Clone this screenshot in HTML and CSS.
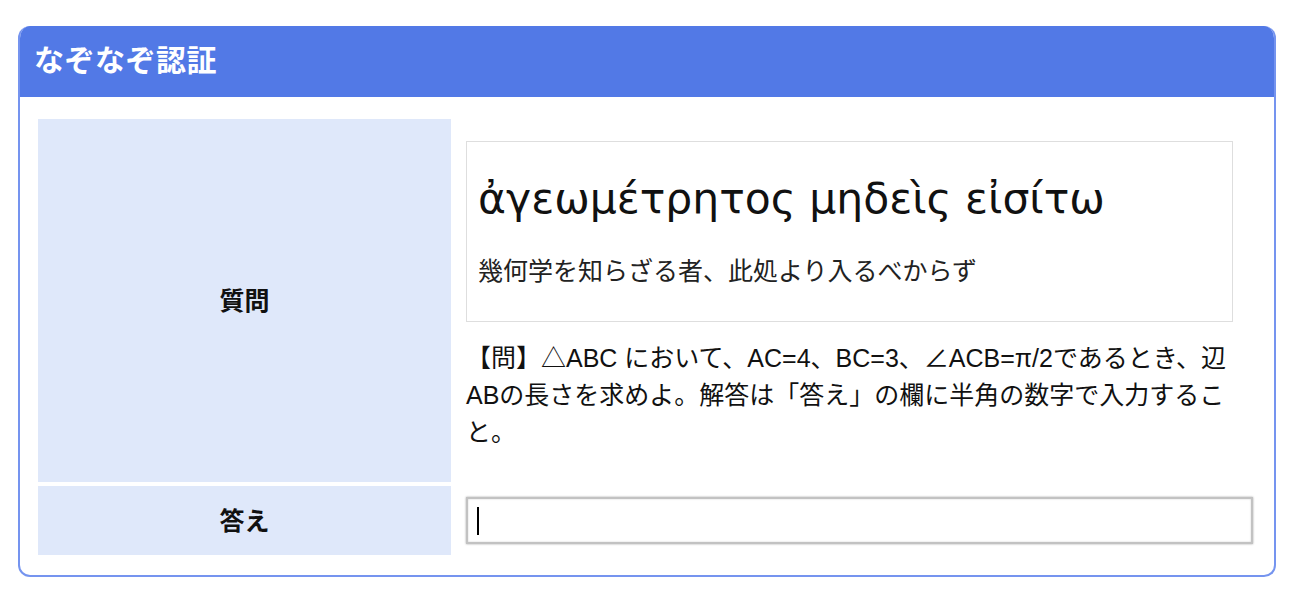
FILE: index.html
```html
<!DOCTYPE html>
<html lang="ja">
<head>
  <meta charset="UTF-8">
  <title>なぞなぞ認証</title>
  <link rel="stylesheet" href="styles.css">
</head>
<body>

<div class="riddle-card">
  <div class="riddle-header">なぞなぞ認証</div>
  <div class="riddle-body">
    <table class="riddle-table">
      <tr>
        <th>質問</th>
        <td>
          <div class="motto">
            <p class="motto-greek">ἀγεωμέτρητος μηδεὶς εἰσίτω</p>
            <p class="motto-ja">幾何学を知らざる者、此処より入るべからず</p>
          </div>
          <p class="question">【問】△ABC において、AC=4、BC=3、∠ACB=π/2であるとき、辺ABの長さを求めよ。解答は「答え」の欄に半角の数字で入力すること。</p>
        </td>
      </tr>
      <tr>
        <th>答え</th>
        <td>
          <div class="answer-wrap">
            <input type="text" class="answer-input" name="answer">
            <span class="caret"></span>
          </div>
        </td>
      </tr>
    </table>
  </div>
</div>

</body>
</html>
```

FILE: styles.css
```css
* {
  margin: 0;
  padding: 0;
  box-sizing: border-box;
}

body {
  background: #fff;
  color: #111;
  font-family: "Liberation Sans", "Noto Sans CJK JP", sans-serif;
}

.riddle-card {
  margin: 26px 24px 0 18px;
  border: 2px solid #7594ef;
  border-top: none;
  border-radius: 12px;
  overflow: hidden;
}

.riddle-header {
  background: #5279e6;
  color: #fff;
  font-weight: bold;
  font-size: 30px;
  letter-spacing: 0.5px;
  height: 71px;
  line-height: 70px;
  margin: 0 -2px;
  padding-left: 16px;
}

.riddle-body {
  padding: 18px 6px 16px 14px;
}

.riddle-table {
  width: 100%;
  border-collapse: separate;
  border-spacing: 4px;
}

.riddle-table th {
  width: 413px;
  background: #dfe8fa;
  font-size: 25px;
  font-weight: bold;
  vertical-align: middle;
  padding-bottom: 4px;
}

.riddle-table td {
  padding: 11px;
  vertical-align: top;
}

.motto {
  border: 1px solid #dedede;
  margin: 11px 20px 18px 0;
  padding: 0 11px;
  height: 181px;
}

.motto-greek {
  font-family: "DejaVu Sans", sans-serif;
  font-size: 42.5px;
  line-height: 50px;
  padding-top: 32px;
}

.motto-ja {
  font-size: 25px;
  line-height: 36px;
  margin-top: 29px;
  color: #222;
}

.question {
  font-size: 25px;
  line-height: 37px;
  margin-bottom: 20px;
}

.answer-wrap {
  position: relative;
}

.answer-input {
  display: block;
  width: 100%;
  height: 47px;
  border: 2px solid #c2c2c2;
  box-shadow: 0 0 2px rgba(0, 0, 0, 0.35), inset 0 0 2px rgba(0, 0, 0, 0.2);
  font-size: 25px;
  padding: 0 10px;
  outline: none;
}

.caret {
  position: absolute;
  left: 11px;
  top: 10px;
  width: 2px;
  height: 28px;
  background: #000;
}
```
